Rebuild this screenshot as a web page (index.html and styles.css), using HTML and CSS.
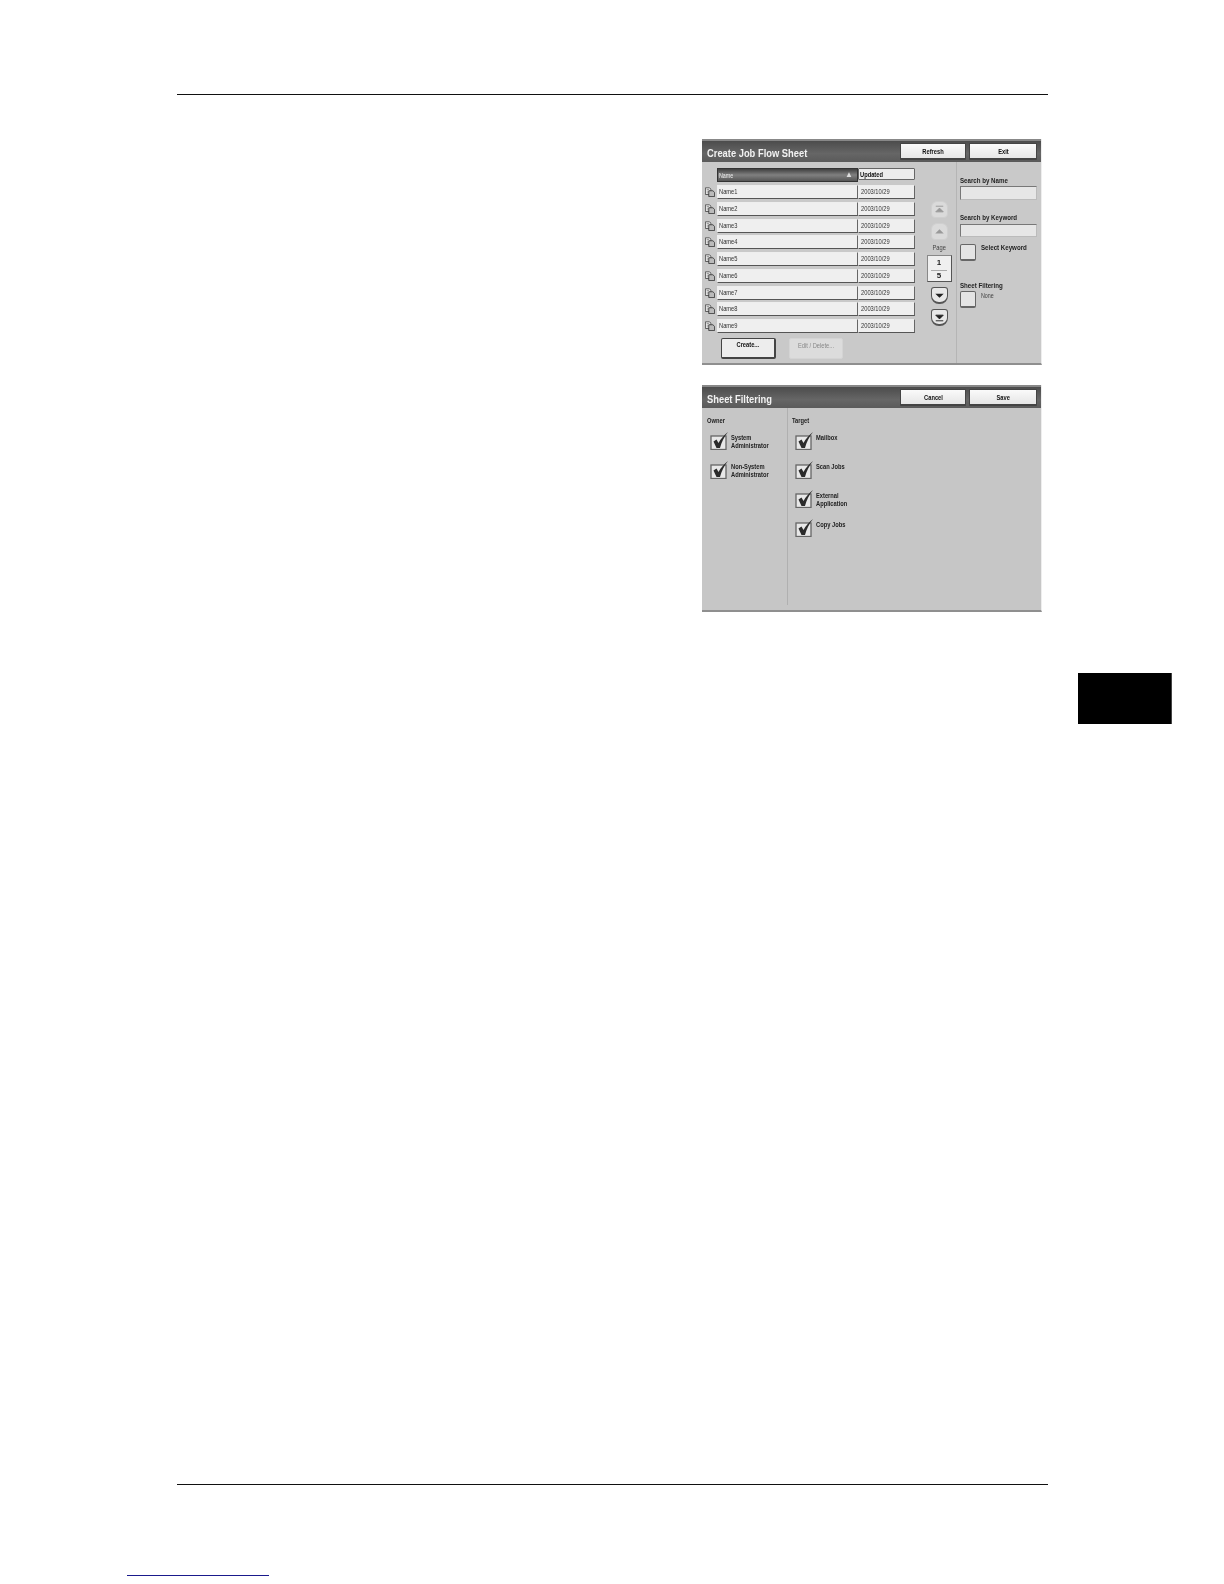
FILE: index.html
```html
<!DOCTYPE html>
<html lang="en">
<head>
<meta charset="utf-8">
<title>Create Job Flow Sheet</title>
<link rel="stylesheet" href="styles.css">
</head>
<body>
<svg class="defs" width="0" height="0" aria-hidden="true">
  <symbol id="doc" viewBox="0 0 12 12">
    <path d="M.5 1h5l1.500 1.500V9H.5z" fill="#eee" stroke="#444"/>
    <path d="M4.500 4.500h5l2 2v5h-7z" fill="#bbb" stroke="#333"/>
    <path d="M2 3h3M2 5h2M2 7h2" stroke="#666" stroke-width=".7"/>
  </symbol>
  <symbol id="check" viewBox="0 0 18 18">
    <rect x="1" y="4" width="15" height="13.500" fill="#e8e8e8" stroke="#666" stroke-width="1.300"/>
    <path d="M3.500 9.500l3-2 2 3.500C10.500 7 14 3 18 0 14 5 11.500 10 10 16H6.500z" fill="#2b2b2b"/>
  </symbol>
</svg>
<div class="page">
  <div class="rule"></div>
  <main class="content">
    <section class="panel panel-first">
      <header class="bar">
        <h2 class="title">Create Job Flow Sheet</h2>
        <button class="bar-btn"><span class="sq">Refresh</span></button>
        <button class="bar-btn"><span class="sq">Exit</span></button>
      </header>
      <div class="sheet-body">
        <div class="list-col">
          <div class="list-head">
            <div class="head-name"><span class="sql">Name</span><span class="sort">▲</span></div>
            <div class="head-date"><span class="sql">Updated</span></div>
          </div>
          <div class="rows">
            <div class="row"><svg class="doc"><use href="#doc"/></svg><span class="cell-name"><span class="sql">Name1</span></span><span class="cell-date"><span class="sql">2003/10/29</span></span></div>
            <div class="row"><svg class="doc"><use href="#doc"/></svg><span class="cell-name"><span class="sql">Name2</span></span><span class="cell-date"><span class="sql">2003/10/29</span></span></div>
            <div class="row"><svg class="doc"><use href="#doc"/></svg><span class="cell-name"><span class="sql">Name3</span></span><span class="cell-date"><span class="sql">2003/10/29</span></span></div>
            <div class="row"><svg class="doc"><use href="#doc"/></svg><span class="cell-name"><span class="sql">Name4</span></span><span class="cell-date"><span class="sql">2003/10/29</span></span></div>
            <div class="row"><svg class="doc"><use href="#doc"/></svg><span class="cell-name"><span class="sql">Name5</span></span><span class="cell-date"><span class="sql">2003/10/29</span></span></div>
            <div class="row"><svg class="doc"><use href="#doc"/></svg><span class="cell-name"><span class="sql">Name6</span></span><span class="cell-date"><span class="sql">2003/10/29</span></span></div>
            <div class="row"><svg class="doc"><use href="#doc"/></svg><span class="cell-name"><span class="sql">Name7</span></span><span class="cell-date"><span class="sql">2003/10/29</span></span></div>
            <div class="row"><svg class="doc"><use href="#doc"/></svg><span class="cell-name"><span class="sql">Name8</span></span><span class="cell-date"><span class="sql">2003/10/29</span></span></div>
            <div class="row"><svg class="doc"><use href="#doc"/></svg><span class="cell-name"><span class="sql">Name9</span></span><span class="cell-date"><span class="sql">2003/10/29</span></span></div>
          </div>
          <div class="actions">
            <button class="act act-main"><span class="sq">Create...</span></button>
            <button class="act act-off"><span class="sq">Edit / Delete...</span></button>
          </div>
        </div>
        <div class="pager">
          <button class="pg pg-off"><svg viewBox="0 0 16 16"><path d="M4 4.500h8M8 6.500l4 4H4z" stroke="#999" fill="#999"/></svg></button>
          <button class="pg pg-off pg-gap"><svg viewBox="0 0 16 16"><path d="M8 5.500l4.500 4.500h-9z" fill="#999"/></svg></button>
          <div class="pg-label"><span class="sq">Page</span></div>
          <div class="pg-box"><span>1</span><span class="pg-total">5</span></div>
          <button class="pg pg-on pg-gap2"><svg viewBox="0 0 16 16"><path d="M8 10.500L3.500 6h9z" fill="#222"/></svg></button>
          <button class="pg pg-on pg-gap2"><svg viewBox="0 0 16 16"><path d="M4 11.500h8M8 9.500L4 5.500h8z" stroke="#222" fill="#222"/></svg></button>
        </div>
        <aside class="side">
          <div class="side-label first"><span class="sql">Search by Name</span></div>
          <div class="field field-first"></div>
          <div class="side-label second"><span class="sql">Search by Keyword</span></div>
          <div class="field"></div>
          <div class="pick-row"><button class="pick"></button><span class="pick-text strong"><span class="sql">Select Keyword</span></span></div>
          <div class="side-label third"><span class="sql">Sheet Filtering</span></div>
          <div class="pick-row tight"><button class="pick"></button><span class="pick-text"><span class="sql">None</span></span></div>
        </aside>
      </div>
    </section>

    <section class="panel panel-second">
      <header class="bar">
        <h2 class="title">Sheet Filtering</h2>
        <button class="bar-btn"><span class="sq">Cancel</span></button>
        <button class="bar-btn"><span class="sq">Save</span></button>
      </header>
      <div class="filter-body">
        <div class="owner-col">
          <div class="group-label"><span class="sql">Owner</span></div>
          <div class="checks">
            <div class="chk"><svg class="tick"><use href="#check"/></svg><span class="sql">System<br>Administrator</span></div>
            <div class="chk"><svg class="tick"><use href="#check"/></svg><span class="sql">Non-System<br>Administrator</span></div>
          </div>
        </div>
        <div class="target-col">
          <div class="group-label"><span class="sql">Target</span></div>
          <div class="checks">
            <div class="chk"><svg class="tick"><use href="#check"/></svg><span class="sql">Mailbox</span></div>
            <div class="chk"><svg class="tick"><use href="#check"/></svg><span class="sql">Scan Jobs</span></div>
            <div class="chk"><svg class="tick"><use href="#check"/></svg><span class="sql">External<br>Application</span></div>
            <div class="chk"><svg class="tick"><use href="#check"/></svg><span class="sql">Copy Jobs</span></div>
          </div>
        </div>
      </div>
    </section>

    <div class="tab"></div>
  </main>
  <div class="rule"></div>
  <div class="link-line"></div>
</div>
</body>
</html>
```

FILE: styles.css
```css
* { box-sizing: border-box; }
html, body { margin: 0; padding: 0; background: #fff; }
.defs { display: block; height: 0; }
.page {
  width: 1224px;
  height: 1584px;
  overflow: hidden;
  display: flex;
  flex-direction: column;
  padding-top: 94px;
  font-family: "Liberation Sans", Arial, sans-serif;
}
.rule { margin-left: 177px; width: 871px; height: 1px; background: #111; flex: none; }
.content { flex: 1; padding-top: 44px; }
.link-line { margin: 90px 0 8px 127px; width: 142px; height: 1px; background: #1a1a8c; flex: none; }

/* The device font is condensed: text is squeezed horizontally */
.sq, .sql { display: inline-block; transform: scaleX(.82); white-space: nowrap; }
.sql { transform-origin: left center; }

.panel {
  margin-left: 702px;
  width: 340px;
  background: #c9c9c9;
  border-right: 1px solid #eee;
  border-bottom: 2px solid #8f8f8f;
  display: flex;
  flex-direction: column;
  filter: blur(.4px);
}
.panel-first { height: 226px; }
.panel-second { height: 227px; margin-top: 20px; }

.bar {
  flex: none;
  height: 23px;
  display: flex;
  align-items: center;
  gap: 3px;
  padding: 0 4px 0 5px;
  background: linear-gradient(#4c4c4c, #666 60%, #5a5a5a);
  border-top: 2px solid #888;
}
.title {
  flex: 1;
  margin: 0;
  padding-top: 2px;
  font-size: 11px;
  font-weight: bold;
  color: #f2f2f2;
  transform: scaleX(.85);
  transform-origin: left center;
}
.bar-btn {
  width: 66px;
  height: 17px;
  padding: 0;
  border: 1px solid #444;
  border-bottom-width: 2px;
  border-radius: 1px;
  background: linear-gradient(#fafafa, #e6e6e6);
  font: bold 7px "Liberation Sans", Arial, sans-serif;
  color: #111;
}
.bar-btn:last-child { width: 68px; }

.sheet-body { flex: 1; display: flex; }
.list-col { width: 223px; padding: 6px 0 0 3px; flex: none; }
.list-head { display: flex; margin-left: 12px; height: 14px; }
.head-name {
  width: 141px;
  display: flex;
  justify-content: space-between;
  align-items: center;
  padding: 0 4px 0 1px;
  background: linear-gradient(#3f3f3f, #808080 50%, #555);
  border: 1px solid #333;
  color: #eee;
  font-size: 6.500px;
}
.sort { font-size: 8px; line-height: 8px; color: #ddd; }
.head-date {
  width: 57px;
  height: 12px;
  padding: 2px 1px;
  background: #ededed;
  border: 1px solid #666;
  border-radius: 1px;
  font-size: 7px;
  line-height: 7px;
  font-weight: bold;
  color: #111;
}
.rows { margin-top: 3px; display: flex; flex-direction: column; gap: 2.750px; }
.row { display: flex; align-items: center; height: 14px; }
.doc { width: 10px; height: 10px; margin-right: 2px; flex: none; }
.cell-name, .cell-date {
  height: 14px;
  padding: 2px 1px 0;
  background: #efefef;
  border: 1px solid #eee;
  border-right-color: #666;
  border-bottom-color: #555;
  font-size: 7px;
  line-height: 8px;
  color: #333;
}
.cell-name { width: 141px; }
.cell-date { width: 57px; padding-left: 2px; }

.actions { display: flex; gap: 13px; margin: 5px 0 0 16px; }
.act {
  width: 54px;
  height: 21px;
  padding: 0 0 7px;
  border-radius: 2px;
  font: 7px "Liberation Sans", Arial, sans-serif;
}
.act-main { width: 55px; background: #ededed; border: 1px solid #444; border-bottom-width: 2px; border-right-width: 2px; font-weight: bold; color: #111; }
.act-off { background: #dcdcdc; border: 1px solid #d4d4d4; color: #888; }

.pager { width: 28px; flex: none; display: flex; flex-direction: column; align-items: center; padding-top: 39px; }
.pg { width: 17px; height: 17px; padding: 0; border-radius: 3px 3px 8px 8px; display: block; }
.pg svg { display: block; width: 15px; height: 15px; }
.pg-off { background: #dadada; border: 1px solid #cfcfcf; border-radius: 6px 6px 4px 4px; }
.pg-on { background: #e8e8e8; border: 1px solid #555; border-bottom-width: 2px; }
.pg-gap { margin-top: 5px; }
.pg-label { margin-top: 4px; height: 8px; line-height: 8px; font-size: 7px; color: #444; }
.pg-box {
  margin-top: 3px;
  width: 25px;
  height: 27px;
  background: #efefef;
  border: 1px solid #555;
  border-top-color: #888;
  border-left-color: #888;
  display: grid;
  grid-template-rows: 1fr 1fr;
  justify-items: center;
  align-items: center;
  font-size: 8px;
  font-weight: bold;
  color: #222;
}
.pg-total { border-top: 1px solid #aaa; width: 16px; text-align: center; }
.pg-gap2 { margin-top: 5px; }

.side {
  flex: 1;
  margin-left: 3px;
  padding-left: 3px;
  border-left: 1px solid #b5b5b5;
  font-size: 7.500px;
  color: #222;
}
.side-label { font-weight: bold; height: 8px; line-height: 8px; white-space: nowrap; }
.first { margin-top: 15px; }
.second { margin-top: 14px; }
.third { margin-top: 21px; }
.field {
  margin-top: 2px;
  width: 77px;
  height: 13.500px;
  background: #e6e6e6;
  border: 1px solid #777;
  border-right-color: #bbb;
  border-bottom-color: #bbb;
}
.field-first { margin-top: 1px; }
.pick-row { display: flex; align-items: flex-start; gap: 5px; margin-top: 7px; }
.pick-row.tight { margin-top: 1px; }
.pick {
  width: 16px;
  height: 17px;
  padding: 0;
  background: #e4e4e4;
  border: 1px solid #666;
  border-bottom-width: 2px;
  border-radius: 2px;
}
.pick-text { padding-top: 1px; font-size: 6.500px; color: #444; line-height: 8px; }
.pick-text.strong { padding-top: 0; font-size: 7.500px; font-weight: bold; color: #222; }

.filter-body { flex: 1; display: flex; background: #c6c6c6; }
.owner-col { width: 86px; padding: 9px 0 0 5px; border-right: 1px solid #b0b0b0; margin-bottom: 5px; flex: none; }
.target-col { padding: 9px 0 0 4px; }
.group-label { font-size: 7px; font-weight: bold; height: 8px; line-height: 8px; color: #222; }
.checks { display: flex; flex-direction: column; gap: 11px; margin-top: 7px; margin-left: 3px; }
.chk {
  display: flex;
  gap: 3px;
  height: 18px;
  font-size: 7px;
  font-weight: bold;
  line-height: 8px;
  color: #222;
}
.chk .sql { padding-top: 2px; transform-origin: left top; }
.tick { width: 18px; height: 18px; flex: none; }

.tab { margin: 61px 0 0 1078px; width: 94px; height: 51px; background: #000; border-right: 1px solid #444; }
```
